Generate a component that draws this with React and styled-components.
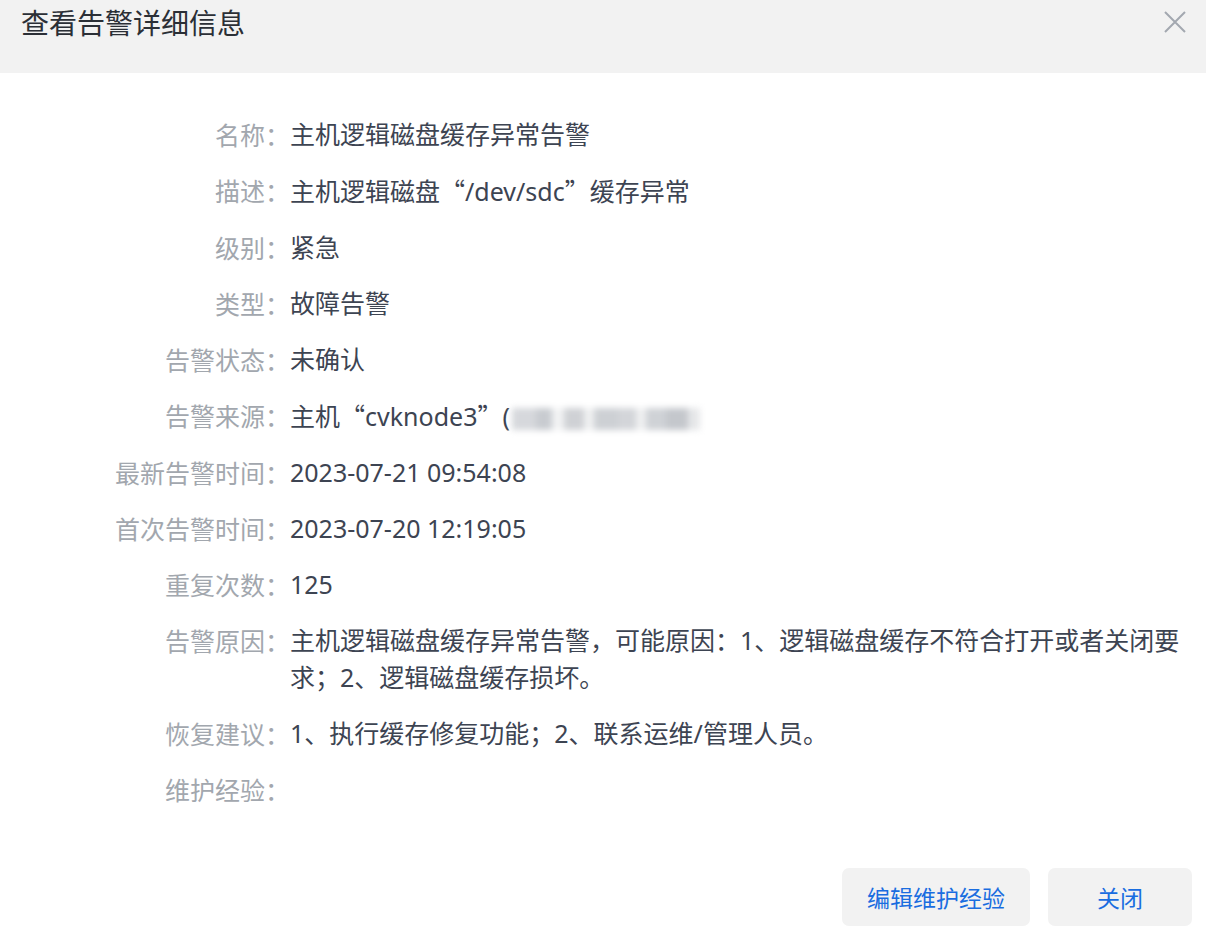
import React from "react";
import styled, { createGlobalStyle } from "styled-components";

const GlobalStyle = createGlobalStyle`
  html, body {
    margin: 0;
    padding: 0;
    background: #ffffff;
  }
  body {
    font-family: "Noto Sans", "Noto Sans CJK SC", sans-serif;
  }
`;

const Dialog = styled.div`
  width: 1206px;
  height: 940px;
  display: flex;
  flex-direction: column;
  background: #ffffff;
`;

const Header = styled.div`
  height: 73px;
  box-sizing: border-box;
  background: #f2f2f2;
  display: flex;
  align-items: flex-start;
  justify-content: space-between;
  padding: 2px 18px 0 21px;
`;

const Title = styled.h2`
  margin: 0;
  font-family: "Noto Sans CJK SC", sans-serif;
  font-size: 28px;
  font-weight: 400;
  line-height: 40px;
  color: #2b2f36;
`;

const CloseButton = styled.button`
  border: 0;
  background: transparent;
  padding: 0;
  margin-top: 7px;
  width: 26px;
  height: 26px;
  cursor: pointer;
  display: flex;
  align-items: center;
  justify-content: center;
`;

const Body = styled.div`
  flex: 1;
  padding: 43px 16px 0 0;
  display: flex;
  flex-direction: column;
  gap: 19px;
`;

const Row = styled.div`
  display: grid;
  grid-template-columns: 290px 1fr;
  font-family: "Noto Sans", "Noto Sans CJK SC", sans-serif;
  font-size: 25px;
  line-height: 37px;
`;

const Label = styled.div`
  font-family: "Noto Sans CJK SC", sans-serif;
  text-align: right;
  color: #a2a7ae;
  white-space: nowrap;
`;

const Value = styled.div`
  color: #3d4452;
`;

const Cjk = styled.span`
  font-family: "Noto Sans CJK SC", sans-serif;
`;

const Blurred = styled.span`
  display: inline-flex;
  vertical-align: middle;
  margin-left: 2px;
  height: 22px;
  filter: blur(3px);
`;

const BlurCell = styled.span`
  display: inline-block;
  width: ${(p) => p.w}px;
  height: 22px;
  background: ${(p) => p.c};
`;

const Footer = styled.div`
  display: flex;
  justify-content: flex-end;
  gap: 18px;
  padding: 0 14px 14px 0;
`;

const Button = styled.button`
  height: 58px;
  width: ${(p) => p.w}px;
  border: 0;
  border-radius: 7px;
  background: #f2f2f2;
  color: #1a6de0;
  font-family: "Noto Sans CJK SC", sans-serif;
  font-size: 23px;
  cursor: pointer;
`;

const blurCells = [
  ["#d6d8dc", 24], ["#c8cbd0", 16], ["#f2f3f4", 12], ["#cfd1d5", 20],
  ["#f0f1f2", 10], ["#cdd0d4", 24], ["#d3d5d9", 18], ["#eff0f1", 10],
  ["#cfd2d6", 20], ["#c4c7cc", 22], ["#e6e7e9", 12],
];

const rows = [
  ["名称：", "主机逻辑磁盘缓存异常告警"],
  [
    "描述：",
    <>
      主机逻辑磁盘<Cjk>“</Cjk>/dev/sdc<Cjk>”</Cjk>缓存异常
    </>,
  ],
  ["级别：", "紧急"],
  ["类型：", "故障告警"],
  ["告警状态：", "未确认"],
  [
    "告警来源：",
    <>
      主机<Cjk>“</Cjk>cvknode3<Cjk>”</Cjk>(
      <Blurred>
        {blurCells.map(([c, w], i) => (
          <BlurCell key={i} c={c} w={w} />
        ))}
      </Blurred>
    </>,
  ],
  ["最新告警时间：", "2023-07-21 09:54:08"],
  ["首次告警时间：", "2023-07-20 12:19:05"],
  ["重复次数：", "125"],
  [
    "告警原因：",
    "主机逻辑磁盘缓存异常告警，可能原因：1、逻辑磁盘缓存不符合打开或者关闭要求；2、逻辑磁盘缓存损坏。",
  ],
  ["恢复建议：", "1、执行缓存修复功能；2、联系运维/管理人员。"],
  ["维护经验：", ""],
];

export default function App() {
  return (
    <>
      <GlobalStyle />
      <Dialog>
        <Header>
          <Title>查看告警详细信息</Title>
          <CloseButton aria-label="关闭">
            <svg width="24" height="24" viewBox="0 0 24 24">
              <path
                d="M2 2 L22 22 M22 2 L2 22"
                stroke="#a3a8b0"
                strokeWidth="2"
                fill="none"
              />
            </svg>
          </CloseButton>
        </Header>
        <Body>
          {rows.map(([label, value], i) => (
            <Row key={i}>
              <Label>{label}</Label>
              <Value>{value}</Value>
            </Row>
          ))}
        </Body>
        <Footer>
          <Button w={188}>编辑维护经验</Button>
          <Button w={144}>关闭</Button>
        </Footer>
      </Dialog>
    </>
  );
}
